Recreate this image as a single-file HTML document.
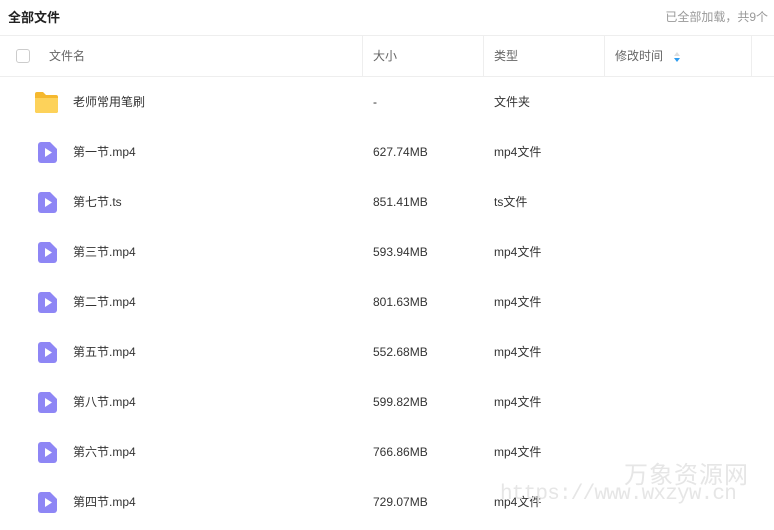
<!DOCTYPE html>
<html><head><meta charset="utf-8"><style>
body{margin:0;width:774px;height:530px;overflow:hidden;background:#fff;font-family:"Liberation Sans","Noto Sans CJK SC",sans-serif;position:relative;color:#333}
.t{position:absolute;left:8px;top:7px;font-size:13px;font-weight:bold;color:#222}
.r{position:absolute;right:6px;top:8px;font-size:12px;color:#999}
.hl{position:absolute;left:0;right:0;height:1px;background:#eee}
.vl{position:absolute;top:36px;height:40px;width:1px;background:#eee}
.h{position:absolute;top:48px;font-size:12px;color:#666;line-height:16px}
.cb{position:absolute;left:16px;top:49px;width:12px;height:12px;border:1px solid #ccc;border-radius:3px}
.row{position:absolute;left:0;width:774px;height:0;font-size:12px;color:#333}
.row span{position:absolute;top:-8px;line-height:16px;height:16px;white-space:nowrap}
.row svg{position:absolute}
.wm{position:absolute;color:#e6e6e6;white-space:nowrap}
</style></head><body>
<div class="t">全部文件</div>
<div class="r">已全部加载，共9个</div>
<div class="hl" style="top:35px"></div>
<div class="hl" style="top:76px"></div>
<div class="vl" style="left:362px"></div><div class="vl" style="left:483px"></div><div class="vl" style="left:604px"></div><div class="vl" style="left:751px"></div>
<div class="cb"></div>
<div class="h" style="left:49px">文件名</div>
<div class="h" style="left:373px">大小</div>
<div class="h" style="left:494px">类型</div>
<div class="h" style="left:615px">修改时间</div>
<svg style="position:absolute;left:673px;top:51px" width="8" height="12"><path d="M4 1L7 5H1Z" fill="#ddd"/><path d="M4 11L7 7H1Z" fill="#2d9cf0"/></svg>

<div class="row" style="top:102px"><svg style="left:34px;top:-11px" width="25" height="22"><path d="M1 3a2 2 0 0 1 2-2h6l3 3h10a2 2 0 0 1 2 2v14a2 2 0 0 1-2 2H3a2 2 0 0 1-2-2Z" fill="#f5b82e"/><path d="M1 7h23v13a2 2 0 0 1-2 2H3a2 2 0 0 1-2-2Z" fill="#fdd25a"/></svg><span style="left:73px">老师常用笔刷</span><span style="left:373px">-</span><span style="left:494px">文件夹</span></div>

<div class="row" style="top:152px"><svg style="left:38px;top:-10px" width="19" height="21"><path d="M3 0h9l7 7v11a3 3 0 0 1-3 3H3a3 3 0 0 1-3-3V3a3 3 0 0 1 3-3Z" fill="#8e86f5"/><path d="M7 6l7 4.5-7 4.5Z" fill="#fff"/></svg><span style="left:73px">第一节.mp4</span><span style="left:373px">627.74MB</span><span style="left:494px">mp4文件</span></div>
<div class="row" style="top:202px"><svg style="left:38px;top:-10px" width="19" height="21"><path d="M3 0h9l7 7v11a3 3 0 0 1-3 3H3a3 3 0 0 1-3-3V3a3 3 0 0 1 3-3Z" fill="#8e86f5"/><path d="M7 6l7 4.5-7 4.5Z" fill="#fff"/></svg><span style="left:73px">第七节.ts</span><span style="left:373px">851.41MB</span><span style="left:494px">ts文件</span></div>
<div class="row" style="top:252px"><svg style="left:38px;top:-10px" width="19" height="21"><path d="M3 0h9l7 7v11a3 3 0 0 1-3 3H3a3 3 0 0 1-3-3V3a3 3 0 0 1 3-3Z" fill="#8e86f5"/><path d="M7 6l7 4.5-7 4.5Z" fill="#fff"/></svg><span style="left:73px">第三节.mp4</span><span style="left:373px">593.94MB</span><span style="left:494px">mp4文件</span></div>
<div class="row" style="top:302px"><svg style="left:38px;top:-10px" width="19" height="21"><path d="M3 0h9l7 7v11a3 3 0 0 1-3 3H3a3 3 0 0 1-3-3V3a3 3 0 0 1 3-3Z" fill="#8e86f5"/><path d="M7 6l7 4.5-7 4.5Z" fill="#fff"/></svg><span style="left:73px">第二节.mp4</span><span style="left:373px">801.63MB</span><span style="left:494px">mp4文件</span></div>
<div class="row" style="top:352px"><svg style="left:38px;top:-10px" width="19" height="21"><path d="M3 0h9l7 7v11a3 3 0 0 1-3 3H3a3 3 0 0 1-3-3V3a3 3 0 0 1 3-3Z" fill="#8e86f5"/><path d="M7 6l7 4.5-7 4.5Z" fill="#fff"/></svg><span style="left:73px">第五节.mp4</span><span style="left:373px">552.68MB</span><span style="left:494px">mp4文件</span></div>
<div class="row" style="top:402px"><svg style="left:38px;top:-10px" width="19" height="21"><path d="M3 0h9l7 7v11a3 3 0 0 1-3 3H3a3 3 0 0 1-3-3V3a3 3 0 0 1 3-3Z" fill="#8e86f5"/><path d="M7 6l7 4.5-7 4.5Z" fill="#fff"/></svg><span style="left:73px">第八节.mp4</span><span style="left:373px">599.82MB</span><span style="left:494px">mp4文件</span></div>
<div class="row" style="top:452px"><svg style="left:38px;top:-10px" width="19" height="21"><path d="M3 0h9l7 7v11a3 3 0 0 1-3 3H3a3 3 0 0 1-3-3V3a3 3 0 0 1 3-3Z" fill="#8e86f5"/><path d="M7 6l7 4.5-7 4.5Z" fill="#fff"/></svg><span style="left:73px">第六节.mp4</span><span style="left:373px">766.86MB</span><span style="left:494px">mp4文件</span></div>
<div class="row" style="top:502px"><svg style="left:38px;top:-10px" width="19" height="21"><path d="M3 0h9l7 7v11a3 3 0 0 1-3 3H3a3 3 0 0 1-3-3V3a3 3 0 0 1 3-3Z" fill="#8e86f5"/><path d="M7 6l7 4.5-7 4.5Z" fill="#fff"/></svg><span style="left:73px">第四节.mp4</span><span style="left:373px">729.07MB</span><span style="left:494px">mp4文件</span></div>

<div class="wm" style="left:624px;top:455px;font-size:24px;letter-spacing:1px">万象资源网</div>
<div class="wm" style="left:500px;top:483px;font-size:21px;font-family:'Liberation Mono','DejaVu Sans Mono',monospace;letter-spacing:-0.8px">https://www.wxzyw.cn</div>
</body></html>
